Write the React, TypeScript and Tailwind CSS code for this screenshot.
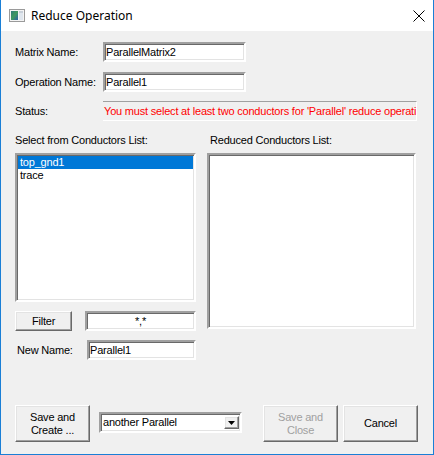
import React from "react";

const sunken =
  "border-2 border-t-[#a0a0a0] border-l-[#a0a0a0] border-b-white border-r-white shadow-[inset_1px_1px_0_#696969,inset_-1px_-1px_0_#e3e3e3] bg-white";
const raised =
  "border border-t-white border-l-white border-b-[#696969] border-r-[#696969] shadow-[inset_-1px_-1px_0_#a0a0a0,inset_1px_1px_0_#e3e3e3] bg-[#f0f0f0]";

function Input({ w, value, center }: { w: string; value: string; center?: boolean }) {
  return (
    <div className={`${sunken} ${w} h-[20px] flex items-center ${center ? "justify-center" : "pl-[1px]"} leading-[13px] overflow-hidden whitespace-nowrap`}>
      {value}
    </div>
  );
}

export default function App() {
  return (
    <div className="w-[434px] h-[455px] bg-[#f0f0f0] border-x border-b border-[#1a7fd6] flex flex-col font-['Liberation_Sans',Arial,sans-serif] text-[11px] tracking-[-0.2px] text-black overflow-hidden">
      {/* Title bar */}
      <div className="h-[31px] bg-white flex items-center relative tracking-normal">
        <svg className="ml-[8px]" width="16" height="13" viewBox="0 0 16 13">
          <defs>
            <linearGradient id="g" x1="0" y1="0" x2="1" y2="1">
              <stop offset="0" stopColor="#2f7a7a" />
              <stop offset="0.5" stopColor="#3f9a5e" />
              <stop offset="1" stopColor="#2b5fa8" />
            </linearGradient>
          </defs>
          <rect x="0.5" y="0.5" width="15" height="12" fill="#f4f4f4" stroke="#9a9a9a" />
          <rect x="2" y="2" width="7" height="9" fill="url(#g)" />
          <rect x="10" y="2" width="4" height="9" fill="#dfe6ee" />
          <rect x="10" y="2" width="4" height="2" fill="#c8d0da" />
        </svg>
        <span className="ml-[6px] font-['Noto_Sans',sans-serif] text-[12px] leading-[16px] text-black">
          Reduce Operation
        </span>
        <svg className="absolute left-[412px] top-[10px]" width="12" height="12" viewBox="0 0 12 12">
          <path d="M0.5 0.5 L11.5 11.5 M11.5 0.5 L0.5 11.5" stroke="#000" strokeWidth="1" />
        </svg>
      </div>

      {/* Content */}
      <div className="flex-1 flex flex-col pl-[14px]">
        <div className="mt-[11px] flex items-center h-[20px]">
          <span className="w-[88px] leading-[13px]">Matrix Name:</span>
          <Input w="w-[143px]" value="ParallelMatrix2" />
        </div>
        <div className="mt-[10px] flex items-center h-[20px]">
          <span className="w-[88px] leading-[13px]">Operation Name:</span>
          <Input w="w-[143px]" value="Parallel1" />
        </div>
        <div className="mt-[9px] flex items-center h-[20px]">
          <span className="w-[88px] leading-[13px]">Status:</span>
          <div className="w-[314px] h-[20px] border-t border-t-[#a0a0a0] border-b border-b-white border-r border-r-white flex items-center pl-[1px] text-[#ff0000] whitespace-nowrap overflow-hidden leading-[13px]">
            You must select at least two conductors for 'Parallel' reduce operation
          </div>
        </div>

        <div className="mt-[13px] flex h-[13px] leading-[13px]">
          <span className="w-[195px]">Select from Conductors List:</span>
          <span>Reduced Conductors List:</span>
        </div>

        <div className="mt-[6px] flex">
          <div className="flex flex-col w-[181px]">
            <div className={`${sunken} h-[149px] w-[181px] pt-[1px] px-[1px] flex flex-col leading-[13px]`}>
              <div className="h-[13px] bg-[#0078d7] text-white pl-[2px]">top_gnd1</div>
              <div className="h-[13px] pl-[2px]">trace</div>
            </div>
            <div className="mt-[9px] flex items-center h-[20px]">
              <button className={`${raised} w-[57px] h-[20px] text-[11px] leading-[13px] flex items-center justify-center`}>
                Filter
              </button>
              <div className="ml-[13px]">
                <Input w="w-[111px]" value="*,*" center />
              </div>
            </div>
            <div className="mt-[9px] flex items-center h-[20px]">
              <span className="w-[72px] pl-[2px] leading-[13px]">New Name:</span>
              <Input w="w-[109px]" value="Parallel1" />
            </div>
          </div>
          <div className={`${sunken} ml-[11px] w-[209px] h-[176px]`} />
        </div>

        <div className="mt-[45px] flex items-start">
          <button className={`${raised} w-[75px] h-[37px] text-[11px] leading-[13px] flex flex-col items-center justify-center`}>
            <span>Save and</span>
            <span>Create ...</span>
          </button>
          <div className={`${sunken} ml-[9px] mt-[7px] w-[143px] h-[21px] flex items-center justify-between`}>
            <span className="pl-[2px] leading-[13px] whitespace-nowrap">another Parallel</span>
            <div className={`${raised} w-[15px] h-[13px] mr-[1px] flex items-center justify-center`}>
              <svg width="7" height="4" viewBox="0 0 7 4">
                <path d="M0 0 H7 L3.5 4 Z" fill="#000" />
              </svg>
            </div>
          </div>
          <button className={`${raised} ml-[21px] w-[75px] h-[37px] text-[11px] leading-[13px] flex flex-col items-center justify-center text-[#a0a0a0]`}>
            <span>Save and</span>
            <span>Close</span>
          </button>
          <button className={`${raised} ml-[5px] w-[75px] h-[37px] text-[11px] leading-[13px] flex items-center justify-center`}>
            Cancel
          </button>
        </div>
      </div>
    </div>
  );
}
